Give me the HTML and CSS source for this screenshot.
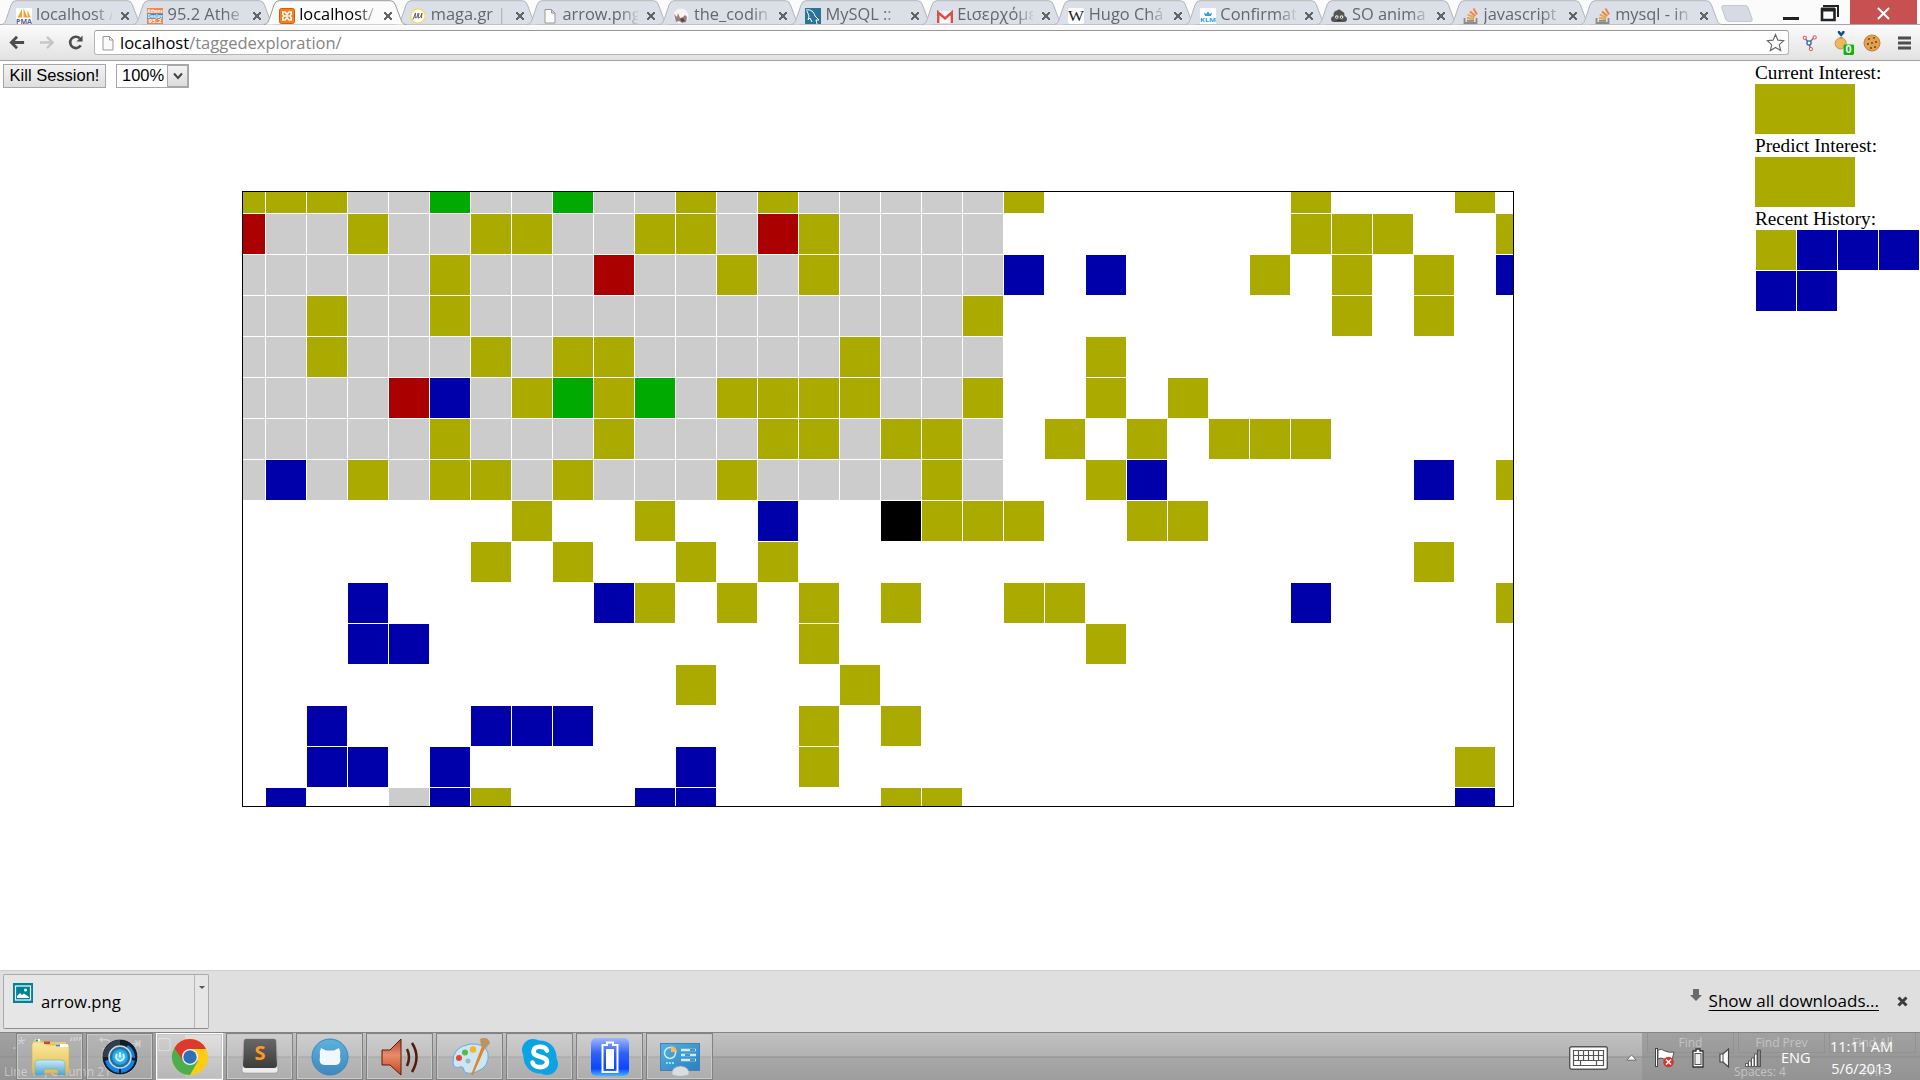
FILE: index.html
```html
<!DOCTYPE html>
<html lang="en">
<head>
<meta charset="utf-8">
<title>localhost/taggedexploration/</title>
<link rel="stylesheet" href="styles.css">
</head>
<body>
<svg class="defs" width="0" height="0">
  <defs>
    <linearGradient id="folder" x1="0" y1="0" x2="0" y2="1"><stop offset="0" stop-color="#f9eaa0"/><stop offset="1" stop-color="#e3bd4c"/></linearGradient>
    <linearGradient id="tray" x1="0" y1="0" x2="0" y2="1"><stop offset="0" stop-color="#c9ebf8"/><stop offset="1" stop-color="#4fa3cc"/></linearGradient>
    <linearGradient id="battery" x1="0" y1="0" x2="0" y2="1"><stop offset="0" stop-color="#9fb6ff"/><stop offset=".4" stop-color="#2f62f5"/><stop offset=".8" stop-color="#0b45ff"/><stop offset="1" stop-color="#49b5ff"/></linearGradient>
    <linearGradient id="horn" x1="0" y1="0" x2="0" y2="1"><stop offset="0" stop-color="#b5452c"/><stop offset=".45" stop-color="#e98c6c"/><stop offset="1" stop-color="#c7441c"/></linearGradient>
    <linearGradient id="panel" x1="0" y1="0" x2="1" y2="1"><stop offset="0" stop-color="#58b0df"/><stop offset="1" stop-color="#2a7fbf"/></linearGradient>
    <radialGradient id="orb"><stop offset="0" stop-color="#7fe0ff"/><stop offset="1" stop-color="#0a9fe8"/></radialGradient>
    <linearGradient id="keycap" x1="0" y1="0" x2="0" y2="1"><stop offset="0" stop-color="#686868"/><stop offset="1" stop-color="#3c3c3c"/></linearGradient>
    <linearGradient id="cat" x1="0" y1="0" x2="0" y2="1"><stop offset="0" stop-color="#5db2dd"/><stop offset="1" stop-color="#3e88bd"/></linearGradient>
    <symbol id="tab-shape" viewBox="0 0 143 25"><path d="M0 24.5C4 24 4 22 5.500 18.500L10 5Q11.500.7 15 .7H126.500Q130 .7 131.500 5L136.500 18.500C138 22 138 24 142 24.500"/></symbol>
    <symbol id="page" viewBox="0 0 16 16"><path d="M3 1.500H9.500L13 5V15H3ZM9.500 1.500V5H13" fill="#fafafa" stroke="#999"/></symbol>
    <symbol id="stack" viewBox="0 0 16 16"><path d="M1.500 10V15H13.500V10M4 12.800H11" fill="none" stroke="#8b8b8b" stroke-width="1.800"/><path d="M4 10 11 11M4.700 6.700 11.300 9.300" stroke="#e5a84c" stroke-width="1.800"/><path d="M7 3.500 12.300 8M10.500.5 14 6.500" stroke="#f5813c" stroke-width="1.900"/></symbol>
  </defs>
</svg>

<header class="browser">
  <div class="tabstrip">
    <nav class="tabs">
      <div class="tab"><svg class="shape"><use href="#tab-shape"/></svg>
        <svg class="fav" viewBox="0 0 16 16"><rect width="16" height="16" fill="#fff"/><path d="M6 1 1.500 9.500H6ZM7.500 0V9.500H11.500ZM11.500 2V9.500H14.500Z" fill="#f7a02a"/><text x="0" y="16" font-size="7.500" font-weight="700" textLength="16" lengthAdjust="spacingAndGlyphs" fill="#5a5a94">PMA</text></svg>
        <span class="label">localhost /</span><i class="x"></i></div>
      <div class="tab"><svg class="shape"><use href="#tab-shape"/></svg>
        <svg class="fav" viewBox="0 0 16 16"><rect width="16" height="16" fill="#f5834a"/><rect y="5.500" width="16" height="5" fill="#2f8fd0"/><g font-size="5" font-weight="700" fill="#fff"><text x=".5" y="4.500" textLength="15" lengthAdjust="spacingAndGlyphs">Athens</text><text x=".5" y="9.800" textLength="15" lengthAdjust="spacingAndGlyphs">DeeJay</text><text x="1.500" y="15.200" textLength="13" lengthAdjust="spacingAndGlyphs">95.2</text></g></svg>
        <span class="label">95.2 Athe</span><i class="x"></i></div>
      <div class="tab active"><svg class="shape"><use href="#tab-shape"/></svg>
        <svg class="fav" viewBox="0 0 16 16"><rect x=".5" y=".5" width="15" height="15" rx="2" fill="#f47e20" stroke="#cf5f0d"/><path d="M3.800 4H6L8 6.300 10 4H12.200V6.500L10.800 8 12.200 9.500V12H10L8 9.700 6 12H3.800V9.500L5.200 8 3.800 6.500ZM6 8H10" fill="none" stroke="#fff" stroke-width="1.500"/></svg>
        <span class="label">localhost/</span><i class="x"></i></div>
      <div class="tab"><svg class="shape"><use href="#tab-shape"/></svg>
        <svg class="fav" viewBox="0 0 16 16"><circle cx="8" cy="8" r="7.200" fill="#fff" stroke="#f5dc6a" stroke-width="1.400"/><path d="M3 11.500 5.500 5 5 10 7 9 8 5M9 5 8 10 10.500 9 12 5 11.500 10" fill="none" stroke="#555" stroke-width=".9"/></svg>
        <span class="label">maga.gr |</span><i class="x"></i></div>
      <div class="tab"><svg class="shape"><use href="#tab-shape"/></svg>
        <svg class="fav"><use href="#page"/></svg>
        <span class="label">arrow.png</span><i class="x"></i></div>
      <div class="tab"><svg class="shape"><use href="#tab-shape"/></svg>
        <svg class="fav" viewBox="0 0 16 16"><circle cx="8" cy="8" r="7.500" fill="#f7f4f2"/><path d="M1 6 4 9 5 5 7 10 10 9 12 7 14 9 13 14 9 15 6 13 3 14Z" fill="#95807d"/><path d="M7 11 10 10 12 13 9 14Z" fill="#5d4742"/></svg>
        <span class="label">the_codin</span><i class="x"></i></div>
      <div class="tab"><svg class="shape"><use href="#tab-shape"/></svg>
        <svg class="fav" viewBox="0 0 16 16"><rect width="16" height="16" fill="#2c7399"/><path d="M1 2C6 1 9 4 10 8L14 12 11 12 12 16M2 3 4 8 3 12 5 10 7 14" fill="none" stroke="#fff"/></svg>
        <span class="label">MySQL ::</span><i class="x"></i></div>
      <div class="tab"><svg class="shape"><use href="#tab-shape"/></svg>
        <svg class="fav" viewBox="0 0 16 16"><rect y="3" width="16" height="12" rx="1" fill="#f8f6f6"/><path d="M1.200 15V4.500L8 10.500 14.800 4.500V15" fill="none" stroke="#df4b45" stroke-width="2.400"/></svg>
        <span class="label">Εισερχόμε</span><i class="x"></i></div>
      <div class="tab"><svg class="shape"><use href="#tab-shape"/></svg>
        <svg class="fav" viewBox="0 0 16 16"><rect width="16" height="16" rx="2" fill="#fff"/><text class="serif" x="0" y="13" font-size="14" textLength="16" lengthAdjust="spacingAndGlyphs" fill="#222">W</text></svg>
        <span class="label">Hugo Chá</span><i class="x"></i></div>
      <div class="tab"><svg class="shape"><use href="#tab-shape"/></svg>
        <svg class="fav" viewBox="0 0 16 16"><rect width="16" height="16" fill="#fff"/><path d="M4 4.500 6 6 8 3.500 10 6 12 4.500 11 8H5Z" fill="#2d9fe8"/><text x="0" y="13.500" font-size="6" font-weight="700" textLength="16" lengthAdjust="spacingAndGlyphs" fill="#2d9fe8">KLM</text></svg>
        <span class="label">Confirmat</span><i class="x"></i></div>
      <div class="tab"><svg class="shape"><use href="#tab-shape"/></svg>
        <svg class="fav" viewBox="0 0 16 16"><path d="M3 14Q0 14 0 11 0 8.500 2.500 8 2 3 6 2.500 8 .5 10.500 3 14 4 13.500 8 16 8.500 16 11 16 14 13 14Z" fill="#555"/><circle cx="5.800" cy="9" r="1.800" fill="#eee"/><circle cx="10.600" cy="9" r="1.800" fill="#eee"/><path d="M5.800 8.500V10M10.600 8.500V10M6 12.500H10" stroke="#333"/></svg>
        <span class="label">SO anima</span><i class="x"></i></div>
      <div class="tab"><svg class="shape"><use href="#tab-shape"/></svg>
        <svg class="fav"><use href="#stack"/></svg>
        <span class="label">javascript</span><i class="x"></i></div>
      <div class="tab"><svg class="shape"><use href="#tab-shape"/></svg>
        <svg class="fav"><use href="#stack"/></svg>
        <span class="label">mysql - in</span><i class="x"></i></div>
    </nav>
    <svg class="newtab" viewBox="0 0 34 20" preserveAspectRatio="none"><path d="M3 .5H25Q27 .5 28 3L32 16Q33 19.500 30 19.500H9Q6 19.500 5 17L1 4Q0 .5 3 .5Z"/></svg>
    <div class="window-buttons">
      <svg class="min" viewBox="0 0 18 24"><path d="M1 18.500H17" stroke="#222" stroke-width="3"/></svg>
      <svg class="max" viewBox="0 0 20 24"><path d="M4 7V6H18V17" fill="none" stroke="#222" stroke-width="2"/><path d="M2 9.500H14.500V20H2Z" fill="none" stroke="#222" stroke-width="2.600"/><path d="M1 9.500H15" stroke="#222" stroke-width="4"/></svg>
      <span class="close"><svg viewBox="0 0 14 14"><path d="M1 1 13 13M13 1 1 13" stroke="#fff" stroke-width="2.200"/></svg></span>
    </div>
  </div>

  <div class="toolbar">
    <svg class="nav" viewBox="0 0 18 18"><path d="M16 9H3M8.500 3 2.500 9 8.500 15" fill="none" stroke="#4d4d4d" stroke-width="3"/></svg>
    <svg class="nav" viewBox="0 0 18 18"><path d="M2 9H15M9.500 3 15.500 9 9.500 15" fill="none" stroke="#c6c6c6" stroke-width="2.500"/></svg>
    <svg class="nav" viewBox="0 0 18 18"><path d="M14.500 12A6 6 0 1 1 13.500 4.500" fill="none" stroke="#4d4d4d" stroke-width="2.800"/><path d="M16.500 1.500V8H10Z" fill="#4d4d4d"/></svg>
    <div class="omnibox">
      <svg class="doc"><use href="#page"/></svg>
      <span class="url"><b>localhost</b>/taggedexploration/</span>
      <svg class="star" viewBox="0 0 20 20"><path d="M10 1.500 12.500 7.500 18.700 8 14 12.200 15.400 18.500 10 15.200 4.600 18.500 6 12.200 1.300 8 7.500 7.500Z" fill="#fff" stroke="#666" stroke-width="1.200"/></svg>
    </div>
    <svg class="ext" viewBox="0 0 16 18"><path d="M3 4 7.500 9 13 3M7.500 9 9 15" fill="none" stroke="#666e80" stroke-width="1.500"/><g fill="#fff" stroke="#d65a62" stroke-width="1.200"><circle cx="3" cy="3.500" r="1.700"/><circle cx="13.500" cy="3" r="1.700"/><circle cx="9.500" cy="15.500" r="1.700"/></g><circle cx="7.500" cy="9" r="2.200" fill="#fff" stroke="#3862c5" stroke-width="1.400"/></svg>
    <svg class="medal" viewBox="0 0 22 28"><path d="M4 2H6L7.500 4 9 2H11V4L7.500 8 4 4Z" fill="#124f86"/><circle cx="7" cy="15" r="5.800" fill="#edb860" stroke="#c99038"/><path d="M6 8H9V10H6Z" fill="#c99038"/><rect x="10" y="16" width="11" height="11" rx="1.500" fill="#0eb50e"/><text x="12" y="25.500" font-size="11" font-weight="700" fill="#fff">0</text></svg>
    <svg class="cookie" viewBox="0 0 18 18"><circle cx="9" cy="9" r="8" fill="#e5a04e" stroke="#c08038"/><g fill="#69421c"><circle cx="6" cy="5" r="1"/><circle cx="11" cy="4" r=".9"/><circle cx="13" cy="8" r="1"/><circle cx="5" cy="10" r="1"/><circle cx="9" cy="9" r=".9"/><circle cx="8" cy="14" r="1"/><circle cx="12" cy="13" r="1"/></g></svg>
    <svg class="menu" viewBox="0 0 13 14"><path d="M0 2H13M0 7H13M0 12H13" stroke="#4d4d4d" stroke-width="3"/></svg>
  </div>
</header>

<main class="page">
  <div class="controls">
    <button class="kill">Kill Session!</button>
    <div class="select"><span>100%</span><i><svg viewBox="0 0 10 8"><path d="M1 1.500 5 6 9 1.500" fill="none" stroke="#444" stroke-width="2"/></svg></i></div>
  </div>
  <div class="board"><div class="cells" id="cells"></div></div>
  <aside class="side">
    <div>Current Interest:</div>
    <div class="swatch"></div>
    <div>Predict Interest:</div>
    <div class="swatch"></div>
    <div>Recent History:</div>
    <div class="history"><i class="y"></i><i class="b"></i><i class="b"></i><i class="b"></i><i class="b"></i><i class="b"></i></div>
  </aside>
</main>

<section class="shelf">
  <div class="download">
    <div class="file">
      <svg viewBox="0 0 20 20"><rect width="20" height="20" fill="#008299"/><rect x="2.500" y="3" width="15" height="14" fill="none" stroke="#fff" stroke-width="1.200"/><path d="M4 15V13L7 10 9 12 11 10.500 16 14V15Z" fill="#fff"/><circle cx="12.500" cy="7" r="1.500" fill="#fff"/></svg>
      <span>arrow.png</span>
    </div>
    <div class="more"></div>
  </div>
  <div class="all">
    <svg class="arrow" viewBox="0 0 12 12"><path d="M3 0H9V6H12L6 12 0 6H3Z" fill="#6a6a6a"/></svg>
    <a>Show all downloads...</a>
    <svg class="dismiss" viewBox="0 0 11 11"><path d="M1.500 1.500 9.500 9.500M9.500 1.500 1.500 9.500" stroke="#3c3c3c" stroke-width="3"/></svg>
  </div>
</section>

<footer class="taskbar">
  <div class="ghost ghost-left"><span class="tools"><i>.*</i><i></i><i>“”</i><i>⮌</i><i>⇥</i><i>▢</i></span><span class="status">Line 14, Column 21</span></div>
  <div class="ghost ghost-right"><span class="finds"><i>Find</i><i>Find Prev</i><i>Find All</i></span><span class="status">Spaces: 4<em>PHP</em></span></div>
  <div class="apps">
    <div class="app"><svg viewBox="0 0 40 40"><path d="M4 3H11L13 5H36V34H4Z" fill="#e9cc68"/><path d="M5 2H10V5H5Z" fill="#fff"/><path d="M5.500 2.500H8V4.500H5.500Z" fill="#3a9a4a"/><path d="M2 8 3 5 14 5 16 8H39V36H2Z" fill="url(#folder)" stroke="#d4b04a" stroke-width=".6"/><path d="M14 4.500H20V7H14Z" fill="#d4452f"/><path d="M26 7H38V10H26Z" fill="#fff"/><path d="M26 7.500H30V9.500H26Z" fill="#3b8ad0"/><path d="M5 38V26Q5 23 9 23H31Q35 23 35 26V38H28V34Q28 32 26 32H16Q14 32 14 34V38Z" fill="url(#tray)" stroke="#5fb0d6" stroke-width=".6"/></svg></div>
    <div class="app"><svg viewBox="0 0 40 40"><circle cx="20" cy="20" r="18" fill="#111d29" stroke="#bfc4c8"/><path d="M20 3A17 17 0 0 0 3 20H10A10 10 0 0 1 20 10Z" fill="#33404c"/><path d="M5 24A16 16 0 0 0 19 36V30A10 10 0 0 1 10 22ZM35 24A16 16 0 0 1 21 36V30A10 10 0 0 0 30 22ZM28 8Q35 13 35 21L30 20Q30 14 25 12Z" fill="#1283e2"/><circle cx="20" cy="20" r="11" fill="#2a6c96" stroke="#c9d8e0" stroke-width="1.500"/><circle cx="20" cy="20" r="8" fill="url(#orb)"/><path d="M20 15V20M17 17A4 4 0 1 0 23 17" fill="none" stroke="#fff" stroke-width="1.500"/></svg></div>
    <div class="app current"><svg viewBox="0 0 40 40"><circle cx="20" cy="20" r="18" fill="#fccd12"/><path d="M20 20 4.400 11A18 18 0 0 0 20 38L28 24Z" fill="#4bae4f"/><path d="M4.400 11A18 18 0 0 1 36 12H20L13 24Z" fill="#dd3a2e"/><path d="M12 24 4.400 11 10 20Z" fill="#4bae4f"/><circle cx="20" cy="20" r="8" fill="#f3f3f3"/><circle cx="20" cy="20" r="6.700" fill="#3070b8"/></svg></div>
    <div class="app"><svg viewBox="0 0 40 40"><path d="M4 3Q4 2 6 2H34Q36 2 36 3L38 33Q38 36 35 36H5Q2 36 2 33Z" fill="#ededed" stroke="#888" stroke-width=".5"/><path d="M6 2H34Q36 2 36 4L37 28Q37 31 34 31H6Q3 31 3 28L4 4Q4 2 6 2Z" fill="url(#keycap)"/><text x="20" y="23" text-anchor="middle" font-size="20" font-weight="700" fill="#ff9a20">S</text></svg></div>
    <div class="app"><svg viewBox="0 0 40 40"><circle cx="20" cy="20" r="18" fill="url(#cat)" stroke="#3a87bb"/><path d="M11 11 16 13.500H24L29 11Q31 15 30 19 32 28 25 28H15Q8 28 10 19 9 15 11 11Z" fill="#f2f7fb"/></svg></div>
    <div class="app"><svg viewBox="0 0 40 40"><path d="M2 13H10L21 2V38L10 28H2Z" fill="url(#horn)" stroke="#5c1c0c"/><path d="M27 12Q31 20 27 29M32 6Q41 20 32 35" fill="none" stroke="#501c0c" stroke-width="2.500"/></svg></div>
    <div class="app"><svg viewBox="0 0 40 40"><path d="M3 26Q2 10 20 7 35 6 38 16 40 30 26 35 17 38 14 34 14 29 10 30 4 32 3 26Z" fill="#cde6f4" stroke="#6aa9cf"/><circle cx="9" cy="21" r="3" fill="#e0483e"/><circle cx="15" cy="15.500" r="3" fill="#58b848"/><circle cx="23" cy="12.500" r="3.200" fill="#f3b526"/><circle cx="18" cy="24" r="2.500" fill="#a5b6c0"/><path d="M32 9 35 11 23 38 21 38Z" fill="#e4832a"/><path d="M30 2Q38-1 40 6L35 12 31 9Z" fill="#bb935f"/></svg></div>
    <div class="app"><svg viewBox="0 0 40 40"><circle cx="13" cy="13" r="11" fill="#0aa4e4"/><circle cx="27" cy="27" r="11" fill="#0aa4e4"/><circle cx="20" cy="20" r="16.500" fill="#0aa4e4"/><path d="M27 13.500C25 8.500 13.500 8 13.500 14.500 13.500 21.500 27 18 27 25 27 32 14 31.500 12.500 25.500" fill="none" stroke="#fff" stroke-width="4.600" stroke-linecap="round"/></svg></div>
    <div class="app"><svg viewBox="0 0 40 40"><rect x="1" y="1" width="38" height="38" rx="5" fill="url(#battery)"/><path d="M12.500 8H17V5.500H23V8H27.500V35H12.500Z" fill="none" stroke="#fff" stroke-width="2"/><rect x="16" y="12" width="8" height="20" fill="#fff"/></svg></div>
    <div class="app"><svg viewBox="0 0 40 40"><rect x=".5" y="6.500" width="39" height="27" fill="url(#panel)" stroke="#3b84b5"/><circle cx="10" cy="16" r="5.500" fill="none" stroke="#c8e8f8" stroke-width="1.500"/><path d="M11 15V9A6 6 0 0 1 17 15Z" fill="#f5bd5c"/><path d="M21 13H36M21 18H36M21 23H36" stroke="#c7eefb" stroke-width="2.600"/><path d="M30 13H35M25 18H30M30 23H35" stroke="#2a75a5" stroke-width="1.600"/><path d="M6 26H14" stroke="#7fe6f6" stroke-width="2" stroke-dasharray="2 1"/><path d="M12 38Q11 30 20.500 29 30 30 29 38Q20 41 12 38Z" fill="#d9dde0" stroke="#999" stroke-width=".5"/></svg></div>
  </div>
  <div class="tray">
    <svg class="keyboard" viewBox="0 0 39 24"><rect x=".7" y=".7" width="37.600" height="22.600" rx="2" fill="#fff" stroke="#555" stroke-width="1.400"/><path d="M4.500 4.500H34.500V19.500H4.500ZM4.500 9.500H34.500M4.500 14.500H34.500M9.500 4.500V14.500M14.500 4.500V14.500M19.500 4.500V14.500M24.500 4.500V14.500M29.500 4.500V14.500M11.500 14.500V19.500M27.500 14.500V19.500" fill="none" stroke="#555" stroke-width="1.200"/></svg>
    <svg class="up" viewBox="0 0 12 7"><path d="M6 .7 11 6.300H1Z" fill="#fff" stroke="#555" stroke-width=".8"/></svg>
    <svg class="flag" viewBox="0 0 20 20"><path d="M1.500 0V19" stroke="#444" stroke-width="3"/><path d="M1.500 1V18" stroke="#fff"/><path d="M3 2Q6 0 10 3 14 5 19 4L17 12Q12 13 9 11 6 9 3 11Z" fill="#fff" stroke="#555"/><circle cx="13.500" cy="14" r="5.300" fill="#d8352c"/><path d="M11 11.500 16 16.500M16 11.500 11 16.500" stroke="#fff" stroke-width="1.600"/></svg>
    <svg class="batt" viewBox="0 0 12 20"><path d="M1 3H4V1H8V3H11V19H1Z" fill="#fff" stroke="#333" stroke-width="1.300"/><rect x="3" y="5.500" width="6" height="11" fill="#eee" stroke="#555"/></svg>
    <svg class="spk" viewBox="0 0 11 20"><path d="M1 6H4L9.500 1V19L4 14H1Z" fill="#fff" stroke="#444" stroke-width="1.200"/><path d="M4 6V14" stroke="#444"/></svg>
    <svg class="sig" viewBox="0 0 16 18"><path d="M.5 14.500H3V17.500H.5ZM3.500 12H6V17.500H3.500ZM6.500 9H9V17.500H6.500ZM9.500 5H12V17.500H9.500Z" fill="#fff" stroke="#444" stroke-width=".8"/><path d="M12.500 1H15.500V17.500H12.500Z" fill="#888" stroke="#444" stroke-width=".8"/></svg>
    <span class="lang">ENG</span>
    <div class="clock"><span>11:11 AM</span><span>5/6/2013</span></div>
  </div>
</footer>
<script src="board.js"></script>
</body>
</html>
```
FILE: styles.css
```css
* { box-sizing: border-box; }
body { margin: 0; width: 1920px; height: 1080px; overflow: hidden; display: flex; flex-direction: column; background: #fff; font-family: "Open Sans", "Noto Sans", sans-serif; font-size: 16.7px; color: #000; }
i { font-style: normal; }
svg { display: block; flex: none; }
.defs { position: absolute; }
.serif { font-family: "Liberation Serif", serif; }

.browser { height: 61px; flex: none; }
.tabstrip { height: 25px; display: flex; background: #fbfbfb; border-bottom: 1px solid #a3a5a9; }
.tabs { display: flex; padding-left: 1px; }
.tab { position: relative; width: 131.600px; height: 25px; display: flex; align-items: flex-start; padding-left: 14.500px; }
.shape { position: absolute; left: 0; top: 0; width: 143px; height: 25px; fill: #dbdfe7; stroke: #b2b4b8; stroke-width: 1; }
.tab.active { z-index: 1; }
.active .shape { fill: #fbfbfb; stroke: #999; }
.fav { position: relative; width: 16px; height: 16px; margin-top: 8px; }
.label { position: relative; width: 76px; height: 25px; margin-left: 4.500px; overflow: hidden; white-space: nowrap; font-size: 16.400px; line-height: 27px; color: #65676c; -webkit-mask-image: linear-gradient(90deg, #000 76%, transparent 104%); mask-image: linear-gradient(90deg, #000 76%, transparent 104%); }
.active .label { color: #000; }
.x { position: relative; width: 8px; height: 8px; margin: 12px 0 0 9px; background: linear-gradient(45deg, transparent 41%, #666 41% 59%, transparent 59%), linear-gradient(-45deg, transparent 41%, #666 41% 59%, transparent 59%); }
.newtab { width: 33px; height: 17px; margin: 5px 0 0 9px; fill: #d6dbe3; stroke: #bec2c8; }
.window-buttons { margin-left: auto; display: flex; padding-right: 3px; }
.min { width: 18px; height: 24px; }
.max { width: 20px; height: 24px; margin: 0 10px 0 20px; }
.close { width: 67px; height: 24px; background: #c75050; display: flex; align-items: center; justify-content: center; }
.close svg { width: 13px; height: 13px; margin-top: 2px; }

.toolbar { height: 36px; display: flex; align-items: center; background: linear-gradient(#fbfbfb, #e2e2e2); border-bottom: 1px solid #a0a0a0; padding: 0 9px; }
.nav { width: 17px; height: 17px; margin-right: 12px; }
.omnibox { width: 1695px; height: 25px; display: flex; align-items: center; background: #fff; border: 1px solid #b5b5b5; border-top-color: #999; border-radius: 3px; padding: 0 3px 0 5px; margin-left: -2px; }
.doc { width: 16px; height: 16px; }
.url { margin-left: 4px; color: #858585; font-size: 16.500px; line-height: 23px; }
.url b { color: #000; font-weight: 400; }
.star { width: 19px; height: 19px; margin-left: auto; }
.ext { width: 15px; height: 18px; margin-left: 13px; }
.medal { width: 21px; height: 27px; margin-left: 17px; }
.cookie { width: 18px; height: 18px; margin-left: 8px; }
.menu { width: 13px; height: 14px; margin-left: 17px; }

.page { height: 909px; flex: none; display: grid; grid-template-columns: 242px 1272px 241px 165px; }
.controls { display: flex; gap: 10px; padding: 3px 0 0 3px; align-items: flex-start; font-family: "Liberation Sans", sans-serif; font-size: 16.500px; }
.kill { width: 103px; height: 24px; padding: 0 0 2px; border: 1px solid #a6a6a6; background: linear-gradient(#f3f3f3, #dedede); font: inherit; color: #000; white-space: nowrap; }
.select { width: 73px; height: 24px; display: flex; border: 1px solid #a6a6a6; padding-left: 5px; line-height: 21px; background: #fff; }
.select i { width: 21px; margin-left: auto; border: 1px solid #a9a9a9; background: linear-gradient(#f3f3f3, #dcdcdc); display: grid; place-items: center; }
.select i svg { width: 10px; height: 8px; }
.board { width: 1272px; height: 616px; margin-top: 130px; border: 1px solid #000; overflow: hidden; }
.cells { display: grid; grid-template-columns: 22px repeat(30, 40px) 17px; grid-template-rows: 21px repeat(14, 40px) 18px; gap: 1px; }
.y { background: #aaaa00; }
.g { background: #cccccc; }
.n { background: #00aa00; }
.r { background: #aa0000; }
.b { background: #0000aa; }
.k { background: #000; }
.side { grid-column: 4; font: 19.200px/21px "Liberation Serif", serif; padding-top: 1px; }
.side > div { white-space: nowrap; }
.swatch { width: 100px; height: 50px; background: #aaaa00; margin: 1px 0; }
.history { display: grid; grid-template-columns: repeat(4, 40px); grid-auto-rows: 40px; gap: 1px; padding: 1px; }

.shelf { height: 62px; flex: none; background: #dfdfdf; border-top: 1px solid #cfcfcf; display: flex; justify-content: space-between; padding: 3px 12px 4px 3px; }
.download { width: 206px; height: 55px; display: flex; border: 1px solid #aaa; border-bottom-color: #8e8e8e; border-radius: 2px; background: #e6e6e6; }
.file { flex: 1; display: flex; padding: 8px 0 0 9px; border-right: 1px solid #b5b5b5; }
.file svg { width: 20px; height: 20px; }
.file span { margin: 7px 0 0 8px; line-height: 24px; }
.more { width: 13px; display: flex; justify-content: center; padding-top: 11px; }
.more::before { content: ""; width: 0; height: 0; border: 3px solid transparent; border-top-color: #555; }
.all { display: flex; align-items: flex-start; }
.arrow { width: 12px; height: 12px; margin-top: 15px; }
.all a { margin: 14px 18px 0 7px; font-size: 17.050px; line-height: 25px; text-decoration: underline; text-decoration-thickness: 1px; text-underline-offset: 3px; }
.dismiss { width: 11px; height: 11px; margin: 22px 0 0; }

.taskbar { position: relative; height: 48px; flex: none; display: flex; justify-content: space-between; border-top: 1px solid #858585; background: linear-gradient(#c1c1c1, #b2b2b2 23px, #8f8f8f 24px, #a7a7a7 25px, #9e9e9e); }
.apps { position: relative; display: flex; gap: 3px; padding-left: 16px; }
.app { width: 67px; height: 47px; display: grid; place-items: center; border: 1px solid #828282; box-shadow: inset 0 0 0 1px #c9c9c9; background: linear-gradient(#ffffff38, #ffffff28); }
.app.current { border-color: #fff; background: linear-gradient(#ffffff80, #ffffff50); }
.app svg { width: 40px; height: 40px; }
.ghost { position: absolute; top: 0; height: 47px; font-size: 12px; color: #c4c4c4; background: linear-gradient(#a1a1a1, #999 23px, #8c8c8c 24px, #9a9a9a 25px, #939393); display: flex; flex-direction: column; justify-content: space-between; }
.ghost-left { left: 0; width: 185px; padding-left: 4px; }
.ghost-right { left: 1642px; width: 278px; }
.tools { display: flex; font-size: 17px; padding-left: 8px; }
.tools i { width: 29px; line-height: 20px; }
.finds { display: flex; gap: 4px; padding: 0 4px 0 5px; }
.finds i { flex: 1; text-align: center; line-height: 19px; border: 1px solid #929292; border-top: 0; }
.status { line-height: 17px; white-space: nowrap; }
.ghost-right .status { padding-left: 92px; display: flex; gap: 76px; }
.status em { font-style: normal; }
.tray { position: relative; display: flex; align-items: center; color: #fff; font-size: 14.500px; padding-right: 28px; }
.keyboard { width: 39px; height: 24px; margin-right: 18px; margin-top: 2px; }
.up { width: 11px; height: 7px; margin-right: 18px; margin-top: 2px; }
.flag { width: 20px; height: 20px; margin-right: 17px; margin-top: 2px; }
.batt { width: 12px; height: 20px; margin-right: 15px; margin-top: 2px; }
.spk { width: 11px; height: 20px; margin-right: 15px; margin-top: 2px; }
.sig { width: 16px; height: 18px; margin-right: 20px; margin-top: 2px; }
.lang { width: 29px; margin-right: 21px; margin-top: 2px; }
.clock { width: 61px; display: flex; flex-direction: column; align-items: center; line-height: 22px; padding-top: 3px; white-space: nowrap; }
```
FILE: board.js
```js
// One letter per cell: y olive, g grey, n green, r red, b blue, k player, . empty
const rows = [
  "yyyggnggnggygygggggy......y...y.",
  "rggyggyyggyygrygggg.......yyy..y",
  "gggggygggrggygyggggb.b...y.y.y.b",
  "ggyggyggggggggggggy........y.y..",
  "ggygggygyygggggyggg..y..........",
  "ggggrbgynyngyyyyggy..y.y........",
  "gggggygggygggyygyyg.y.y.yyy.....",
  "gbgygyygygggyggggyg..yb......b.y",
  ".......y..y..b..kyyy..yy........",
  "......y.y..y.y...............y..",
  "...b.....by.y.y.y..yy.....b....y",
  "...bb.........y......y..........",
  "...........y...y................",
  "..b...bbb.....y.y...............",
  "..bb.b.....b..y...............y.",
  ".b..gby...bb....yy............b."
];
const cells = document.getElementById("cells");
for (const row of rows) {
  for (const c of row) {
    const cell = document.createElement("div");
    if (c !== ".") cell.className = c;
    cells.appendChild(cell);
  }
}
```
